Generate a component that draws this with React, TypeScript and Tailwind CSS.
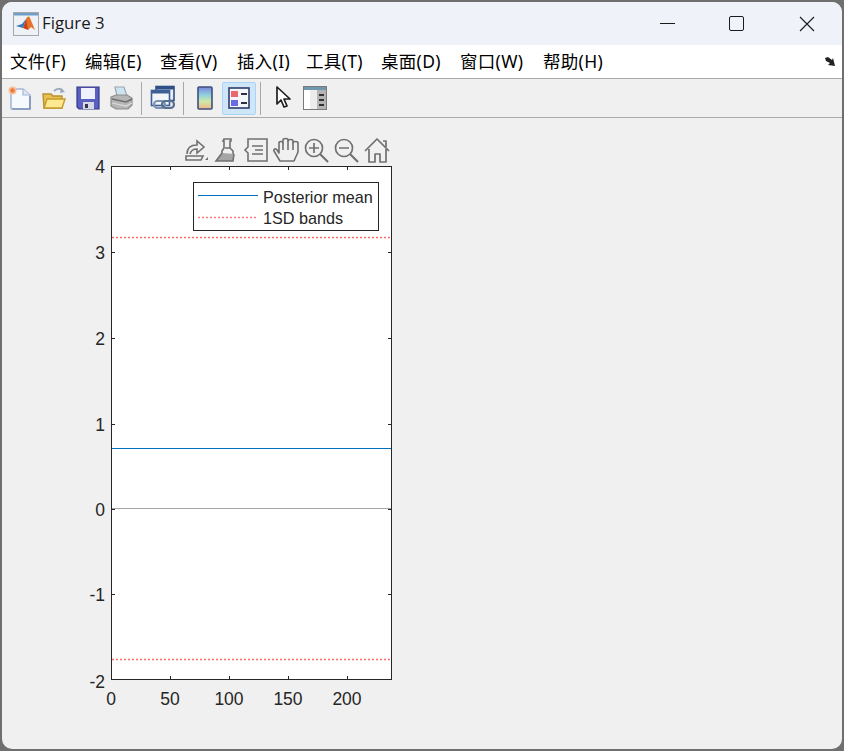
import React from "react";

const menus = [
  { label: "文件(F)", cls: "w-[75px]" },
  { label: "编辑(E)", cls: "w-[75px]" },
  { label: "查看(V)", cls: "w-[77px]" },
  { label: "插入(I)", cls: "w-[69px]" },
  { label: "工具(T)", cls: "w-[75px]" },
  { label: "桌面(D)", cls: "w-[79px]" },
  { label: "窗口(W)", cls: "w-[83px]" },
  { label: "帮助(H)", cls: "w-[70px]" },
];

const MatlabLogo = () => (
  <svg width="26" height="24" viewBox="0 0 26 24">
    <rect x="0.5" y="0.5" width="25" height="23" fill="#eef2f6" stroke="#a8a8a8" />
    <rect x="1" y="1" width="24" height="2.5" fill="#6f9fc8" />
    <path d="M3 14l6-2 4-5-3 9z" fill="#2f79b5" />
    <path d="M13 7c2-3 3-3 4-1l5 12-4-3-3 3-3-4z" fill="#e8722a" />
    <path d="M10 16l3-9 2 11z" fill="#c8401c" />
  </svg>
);

const NewFile = () => (
  <svg width="26" height="26" viewBox="0 0 26 26">
    <path d="M4 4h12l7 6v13a1 1 0 0 1-1 1H5a1 1 0 0 1-1-1z" fill="#f6fafe" stroke="#a5b6d8" strokeWidth="1.6" />
    <path d="M16 4v6h7" fill="#dfe8f5" stroke="#a5b6d8" strokeWidth="1.2" />
    <path d="M5 24h18V11" fill="none" stroke="#7f93b8" strokeWidth="1.6" />
    <circle cx="5.5" cy="5.5" r="3.2" fill="#f0783c" stroke="#f6c09c" strokeWidth="1.8" />
  </svg>
);

const OpenFolder = () => (
  <svg width="26" height="26" viewBox="0 0 26 26">
    <path d="M2 9h8l2 2h9v12H3z" fill="#e8c052" stroke="#b8912f" strokeWidth="1.4" />
    <path d="M3 23l3-9h18l-3 9z" fill="#fde98f" stroke="#c79a2c" strokeWidth="1.4" />
    <path d="M13 6c3-3 7-3 9 0" fill="none" stroke="#9aabbd" strokeWidth="2" />
    <path d="M20 3l4 4-5 1z" fill="#9aabbd" />
  </svg>
);

const SaveDisk = () => (
  <svg width="24" height="24" viewBox="0 0 24 24">
    <path d="M1 1h22v22H3l-2-2z" fill="#5a5fc0" stroke="#343a86" strokeWidth="1.2" />
    <rect x="5" y="2" width="14" height="11" fill="#eef0fb" />
    <rect x="7" y="16" width="11" height="7" fill="#d8d8e4" />
    <rect x="9" y="18" width="3" height="4" fill="#34344c" />
  </svg>
);

const Printer = () => (
  <svg width="24" height="26" viewBox="0 0 24 26">
    <path d="M6 2h9l3 9H8z" fill="#cfe4f3" stroke="#9aa6ae" strokeWidth="1.2" />
    <path d="M2 12l5-2h11l5 3v7l-4 4H7l-5-3z" fill="#b5b5b5" stroke="#8c8c8c" strokeWidth="1.2" />
    <path d="M3 14l14 3 6-3" fill="none" stroke="#6f6f6f" strokeWidth="1.4" />
    <path d="M3 18l14 3 6-3" fill="none" stroke="#dcdcdc" strokeWidth="1.2" />
  </svg>
);

const LinkFigures = () => (
  <svg width="26" height="26" viewBox="0 0 26 26">
    <rect x="6" y="1.5" width="18" height="14" fill="#e8eef6" stroke="#2f4f86" strokeWidth="1.6" />
    <rect x="6" y="1.5" width="18" height="3" fill="#2f4f86" />
    <rect x="1.5" y="5.5" width="18" height="15" fill="#f2f6fb" stroke="#3d5f96" strokeWidth="1.6" />
    <rect x="1.5" y="5.5" width="18" height="3" fill="#3d5f96" />
    <rect x="4" y="16" width="11" height="7" rx="3.5" fill="none" stroke="#7e93b2" strokeWidth="2.2" />
    <rect x="12" y="16" width="12" height="7" rx="3.5" fill="none" stroke="#56708f" strokeWidth="2.2" />
  </svg>
);

const Colorbar = () => (
  <svg width="16" height="24" viewBox="0 0 16 24">
    <defs>
      <linearGradient id="cb" x1="0" y1="0" x2="0" y2="1">
        <stop offset="0" stopColor="#7d84da" />
        <stop offset="0.35" stopColor="#8ecfe0" />
        <stop offset="0.65" stopColor="#cde8a8" />
        <stop offset="1" stopColor="#f3b78a" />
      </linearGradient>
    </defs>
    <rect x="1" y="1" width="14" height="22" rx="1" fill="url(#cb)" stroke="#3f4f7c" strokeWidth="1.6" />
  </svg>
);

const LegendIcon = () => (
  <svg width="22" height="22" viewBox="0 0 22 22">
    <rect x="1" y="1" width="20" height="20" fill="#f4f6fa" stroke="#2e3f6c" strokeWidth="1.6" />
    <rect x="3" y="4" width="7" height="6" fill="#e9686a" />
    <rect x="3" y="13" width="7" height="6" fill="#6a6ae4" />
    <rect x="13" y="6" width="6" height="2" fill="#2e3040" />
    <rect x="13" y="15" width="6" height="2" fill="#2e3040" />
  </svg>
);

const Pointer = () => (
  <svg width="16" height="24" viewBox="0 0 16 24">
    <path d="M2 1v17l4-4 3 7 3-1-3-7h6z" fill="#fff" stroke="#1f1f1f" strokeWidth="1.7" strokeLinejoin="round" />
  </svg>
);

const PropertyEditor = () => (
  <svg width="24" height="24" viewBox="0 0 24 24">
    <rect x="0.5" y="0.5" width="23" height="23" fill="#ececec" stroke="#7a7a7a" />
    <rect x="1" y="1" width="22" height="3" fill="#6f97ad" />
    <rect x="14" y="4" width="9" height="19" fill="#b4b4b4" />
    <rect x="1" y="4" width="6" height="19" fill="#fff" />
    <rect x="16" y="8" width="5" height="2" fill="#333" />
    <rect x="16" y="13" width="5" height="2" fill="#333" />
    <rect x="16" y="18" width="5" height="2" fill="#333" />
  </svg>
);

const Sep = () => <div className="mx-[4px] h-[33px] w-px bg-[#a8a8a8]" />;

const axIcon = "shrink-0 fill-none stroke-[#707070]";

const AxesToolbar = () => (
  <div className="absolute left-[182px] top-[16px] flex h-[32px] items-center gap-[5px]">
    <svg width="25" height="26" viewBox="0 0 25 26" className={axIcon} strokeWidth="1.6">
      <path d="M3 17c0-6 4-9 10-9V4l7 6-7 6v-4c-4 0-6 1-7 5" />
      <path d="M2 19h17l-2 4H2z" />
      <path d="M21 23h3v-3z" fill="#707070" stroke="none" />
    </svg>
    <svg width="24" height="26" viewBox="0 0 24 26" className={axIcon} strokeWidth="1.6">
      <path d="M10 2h7v2h-1v7l3 3v4H8v-4l2-3V4h-1z" />
      <path d="M8 16L2 24h17l1-7" fill="#a6a6a6" />
      <path d="M11 11h5" />
    </svg>
    <svg width="25" height="26" viewBox="0 0 25 26" className={axIcon} strokeWidth="1.6">
      <path d="M5 2h19v22H5v-8l-3-3 3-3z" />
      <path d="M9 9h11M12 13h8M9 17h11" />
    </svg>
    <svg width="26" height="26" viewBox="0 0 26 26" className={axIcon} strokeWidth="1.6" strokeLinejoin="round">
      <path d="M7 24L1 14c-1-2 2-3 3-1l2 3V6c0-2 4-2 4 0V3c0-2 5-2 5 0v1c0-2 5-2 5 0v2c0-2 5-2 5 0v9l-4 9z" />
      <path d="M10 6v7M15 4v9M20 5v8" />
    </svg>
    <svg width="25" height="26" viewBox="0 0 25 26" className={axIcon} strokeWidth="1.7">
      <circle cx="10" cy="11" r="8.5" />
      <path d="M10 6v10M5 11h10" />
      <path d="M16 17l8 8" strokeWidth="2.2" />
    </svg>
    <svg width="25" height="26" viewBox="0 0 25 26" className={axIcon} strokeWidth="1.7">
      <circle cx="10" cy="11" r="8.5" />
      <path d="M5 11h10" />
      <path d="M16 17l8 8" strokeWidth="2.2" />
    </svg>
    <svg width="26" height="26" viewBox="0 0 26 26" className={axIcon} strokeWidth="1.7" strokeLinejoin="round">
      <path d="M1 14L13 2l12 12" />
      <path d="M19 4h3v6" />
      <path d="M5 12v13h6v-8h5v8h6V12" />
    </svg>
  </div>
);

const Chart = () => {
  const xTicks = [
    { x: 109, t: "0" },
    { x: 168, t: "50" },
    { x: 227, t: "100" },
    { x: 286, t: "150" },
    { x: 345, t: "200" },
  ];
  const yTicks = [
    { y: 48, t: "4", d: 7 },
    { y: 134, t: "3", d: 7 },
    { y: 220, t: "2", d: 7 },
    { y: 306, t: "1", d: 7 },
    { y: 391, t: "0", d: 7 },
    { y: 476, t: "-1", d: 7 },
    { y: 561, t: "-2", d: 9 },
  ];
  return (
    <svg width="420" height="600" className="block" fontFamily="Liberation Sans, Arial, sans-serif">
      <rect x="109.5" y="48.5" width="280" height="513" fill="#fff" stroke="#262626" />
      {xTicks.map((k) => (
        <g key={k.t}>
          <path d={`M${k.x + 0.5} 561v-3M${k.x + 0.5} 49v3`} stroke="#262626" />
          <text x={k.x} y="587" fontSize="17.5" fill="#262626" textAnchor="middle">
            {k.t}
          </text>
        </g>
      ))}
      {yTicks.map((k) => (
        <g key={k.t}>
          <path d={`M110 ${k.y + 0.5}h3M389 ${k.y + 0.5}h-3`} stroke="#262626" />
          <text x="103" y={k.y + k.d} fontSize="17.5" fill="#262626" textAnchor="end">
            {k.t}
          </text>
        </g>
      ))}
      <path d="M110 330.5H389" stroke="#0072bd" />
      <path d="M110 390.5H389" stroke="#a6a6a6" />
      <path d="M110 119.5H389M110 541.5H389" stroke="#ff6a6a" strokeWidth="1.6" strokeDasharray="2 2" />
      <rect x="191.5" y="64.5" width="185" height="48" fill="#fff" stroke="#262626" />
      <path d="M196 77.5h60" stroke="#0072bd" />
      <path d="M196 99.5h60" stroke="#ff7a7a" strokeWidth="1.4" strokeDasharray="2 2" />
      <text x="261" y="85" fontSize="16.2" fill="#262626">
        Posterior mean
      </text>
      <text x="261" y="106" fontSize="16.2" fill="#262626">
        1SD bands
      </text>
    </svg>
  );
};

export default function App() {
  return (
    <div className="h-[751px] w-[844px] bg-[#6f6f6f] p-[2px]">
      <div className="flex h-full flex-col overflow-hidden rounded-[10px] bg-[#f0f0f0]">
        <div className="flex h-[43px] shrink-0 items-center bg-[#eff2f9] pl-[11px] font-['Open_Sans',sans-serif] text-[16.8px] text-[#1a1a1a]">
          <MatlabLogo />
          <span className="ml-[3px] -translate-y-px">Figure 3</span>
          <div className="ml-auto flex items-center pr-[27px]">
            <div className="h-px w-[15px] bg-[#1a1a1a]" />
            <div className="ml-[54px] h-[15px] w-[15px] rounded-[2px] border-[1.5px] border-[#1a1a1a]" />
            <svg width="16" height="16" viewBox="0 0 16 16" className="ml-[55px]" stroke="#1a1a1a" strokeWidth="1.1">
              <path d="M1 1l14 14M15 1L1 15" />
            </svg>
          </div>
        </div>
        <div className="flex h-[33px] shrink-0 items-center bg-white pl-[8px] pr-[6px] font-['Noto_Sans','Noto_Sans_CJK_SC',sans-serif] text-[17.5px] tracking-[0.3px] text-black">
          <div className="flex">
            {menus.map((m) => (
              <span key={m.label} className={m.cls}>
                {m.label}
              </span>
            ))}
          </div>
          <svg width="12" height="10" viewBox="0 0 12 10" className="ml-auto" fill="#222">
            <path d="M1 1l3-1 4 3 1-2 2 8-7-1 2-2-4-2z" />
          </svg>
        </div>
        <div className="flex h-[40px] shrink-0 items-center border-y border-[#a9a9a9] pl-[2px]">
          <div className="-ml-[2px] flex w-[35px] justify-center"><NewFile /></div>
          <div className="flex w-[33px] justify-center"><OpenFolder /></div>
          <div className="flex w-[35px] justify-center"><SaveDisk /></div>
          <div className="flex w-[32px] justify-center"><Printer /></div>
          <Sep />
          <div className="flex w-[33px] justify-center"><LinkFigures /></div>
          <Sep />
          <div className="flex w-[34px] justify-center"><Colorbar /></div>
          <div className="flex h-[33px] w-[34px] items-center justify-center rounded-[2px] border border-[#a8d4f5] bg-[#cfe6f9]"><LegendIcon /></div>
          <Sep />
          <div className="ml-[5px] flex w-[26px] justify-center"><Pointer /></div>
          <div className="ml-[6px] flex w-[26px] justify-center"><PropertyEditor /></div>
        </div>
        <div className="relative flex-1">
          <AxesToolbar />
          <Chart />
        </div>
      </div>
    </div>
  );
}
